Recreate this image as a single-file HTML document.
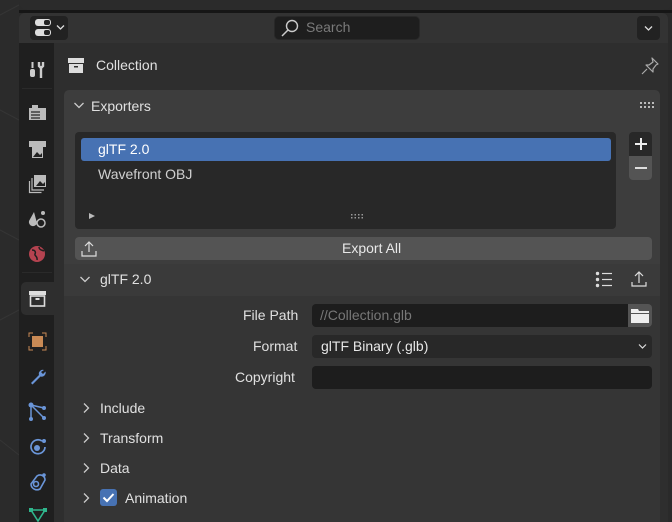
<!DOCTYPE html>
<html><head><meta charset="utf-8"><style>
*{margin:0;padding:0;box-sizing:border-box}
body{width:672px;height:522px;overflow:hidden;background:#2a2a2a;font-family:"Liberation Sans","DejaVu Sans",sans-serif;font-size:14px;color:#dcdcdc;position:relative}
.a{position:absolute}
.t{position:absolute;white-space:nowrap;line-height:1}
.ico{position:absolute}
</style></head><body>
<div class="a" style="left:0;top:0;width:19px;height:522px;background:#2b2b2b"></div>
<svg class="a" style="left:0;top:0" width="19" height="522"><g stroke="#353535" stroke-width="1"><line x1="0" y1="15" x2="19" y2="5"/><line x1="0" y1="110" x2="19" y2="120"/><line x1="0" y1="230" x2="19" y2="240"/><line x1="0" y1="320" x2="19" y2="310"/><line x1="0" y1="440" x2="19" y2="455"/></g></svg>
<div class="a" style="left:19px;top:0;width:653px;height:10px;background:#2b2b2b;border-radius:0 0 8px 8px"></div>
<div class="a" style="left:19px;top:10px;width:653px;height:3px;background:#161616"></div>
<div class="a" style="left:19px;top:13px;width:649px;height:509px;background:#2e2e2e;border-radius:6px 6px 0 0"></div>
<div class="a" style="left:19px;top:13px;width:649px;height:30px;background:#333;border-radius:6px 6px 0 0"></div>
<div class="a" style="left:30px;top:16px;width:38px;height:24px;background:#222;border-radius:4px"></div>
<div class="a" style="left:35px;top:19px;width:16px;height:7px;background:#ddd;border-radius:3px"></div>
<div class="a" style="left:35px;top:29px;width:16px;height:7px;background:#ddd;border-radius:3px"></div>
<div class="a" style="left:44px;top:20px;width:6px;height:5px;background:#222;border-radius:2px"></div>
<div class="a" style="left:44px;top:30px;width:6px;height:5px;background:#222;border-radius:2px"></div>
<svg class="a" style="left:56px;top:24px" width="9" height="7"><path d="M1 1.5L4.5 5L8 1.5" stroke="#ddd" fill="none" stroke-width="1.3"/></svg>
<div class="a" style="left:274px;top:16px;width:146px;height:24px;background:#1e1e1e;border-radius:5px;border:1px solid #282828"></div>
<svg class="a" style="left:279px;top:17px" width="22" height="22"><circle cx="13" cy="9" r="5.5" stroke="#ccc" fill="none" stroke-width="1.4"/><line x1="9" y1="13" x2="3" y2="19" stroke="#ccc" stroke-width="1.5"/></svg>
<div class="t" style="left:306px;top:20px;color:#7a7a7a;font-size:14px">Search</div>
<div class="a" style="left:637px;top:16px;width:23px;height:24px;background:#222;border-radius:4px"></div>
<svg class="a" style="left:644px;top:25px" width="9" height="7"><path d="M1 1.5L4.5 5L8 1.5" stroke="#ddd" fill="none" stroke-width="1.3"/></svg>
<div class="a" style="left:19px;top:43px;width:35px;height:479px;background:#1f1f1f"></div>
<div class="a" style="left:22px;top:88px;width:30px;height:1px;background:#2a2a2a"></div>
<div class="a" style="left:22px;top:272px;width:30px;height:1px;background:#2a2a2a"></div>
<div class="a" style="left:21px;top:282px;width:33px;height:33px;background:#2e2e2e;border-radius:5px 0 0 5px"></div>
<svg class="ico" style="left:28px;top:60px" width="20" height="20"><rect x="2" y="9" width="5" height="8" rx="2" fill="#ccc"/><rect x="3.5" y="2" width="2" height="6" fill="#ccc"/><path d="M11 2v4l2 2 2-2V2M13 8v10" stroke="#ccc" stroke-width="2.4" fill="none"/></svg>
<svg class="ico" style="left:28px;top:103px" width="20" height="20"><rect x="1" y="5" width="17" height="12" fill="#bbb"/><rect x="4" y="2" width="6" height="3" fill="#bbb"/><g stroke="#1f1f1f" stroke-width="1.2"><line x1="3" y1="9" x2="12" y2="9"/><line x1="3" y1="12" x2="12" y2="12"/><line x1="3" y1="15" x2="12" y2="15"/></g></svg>
<svg class="ico" style="left:28px;top:140px" width="20" height="20"><rect x="1" y="1" width="17" height="6" fill="#bbb"/><rect x="4" y="7" width="11" height="11" fill="#bbb"/><path d="M5 17l4-5 3 3 2-2v4z" fill="#1f1f1f"/></svg>
<svg class="ico" style="left:28px;top:174px" width="20" height="20"><rect x="6" y="1" width="12" height="12" fill="#bbb"/><path d="M8 12l4-5 3 3 2-2v4z" fill="#1f1f1f"/><path d="M4 4v12h12M1.5 7v11.5h12" stroke="#bbb" fill="none" stroke-width="1.2"/></svg>
<svg class="ico" style="left:28px;top:209px" width="20" height="20"><path d="M6 3l-5 9a4 4 0 0 0 8 2" fill="#bbb"/><circle cx="13" cy="14" r="4" stroke="#bbb" fill="none" stroke-width="1.5"/><circle cx="15" cy="4" r="2" fill="#bbb"/></svg>
<svg class="ico" style="left:27px;top:244px" width="20" height="20"><circle cx="10" cy="10" r="8" fill="#b54350"/><path d="M5 6c3 0 4 2 3 4s3 2 2 6M12 3c0 3 3 3 5 4" stroke="#1f1f1f" fill="none" stroke-width="1.5"/></svg>
<svg class="ico" style="left:27px;top:288px" width="21" height="21"><rect x="2" y="3" width="17" height="4" fill="#ddd"/><rect x="3.5" y="8" width="14" height="10" fill="none" stroke="#ddd" stroke-width="1.6"/><rect x="8.5" y="10" width="4" height="2" fill="#ddd"/></svg>
<svg class="ico" style="left:28px;top:332px" width="19" height="19"><rect x="4" y="4" width="11" height="11" fill="#c98a55"/><path d="M1 5V1h4M14 1h4v4M18 14v4h-4M5 18H1v-4" stroke="#c98a55" fill="none" stroke-width="1"/></svg>
<svg class="ico" style="left:28px;top:367px" width="20" height="20"><path d="M16 3a4 4 0 0 0-5 5L3 16l1.5 1.5 8-8a4 4 0 0 0 5-5l-2.5 2.5-2-2z" fill="#6a95d8"/></svg>
<svg class="ico" style="left:28px;top:402px" width="20" height="20"><path d="M3 3l13 3M3 3v14M3 3l13 13" stroke="#6a95d8" stroke-width="1.5"/><circle cx="3" cy="3" r="2.5" fill="#6a95d8"/><circle cx="16" cy="6" r="2" fill="#6a95d8"/><circle cx="3" cy="17" r="2" fill="#6a95d8"/><circle cx="16" cy="16" r="2" fill="#6a95d8"/></svg>
<svg class="ico" style="left:28px;top:437px" width="20" height="20"><path d="M14 4a7 7 0 1 0 3 6" stroke="#6a95d8" fill="none" stroke-width="1.7"/><circle cx="9" cy="11" r="3" fill="#6a95d8"/><circle cx="16" cy="4" r="2" fill="#6a95d8"/></svg>
<svg class="ico" style="left:28px;top:472px" width="20" height="20"><path d="M3 12a6 6 0 0 0 9 5l5-9a5 5 0 0 0-8-4z" stroke="#6a95d8" fill="none" stroke-width="1.6"/><circle cx="8" cy="12" r="2.5" stroke="#6a95d8" fill="none" stroke-width="1.6"/><circle cx="16" cy="3" r="1.8" fill="#6a95d8"/></svg>
<svg class="ico" style="left:28px;top:507px" width="20" height="15"><path d="M3 3h14L10 14z" stroke="#2fb58c" fill="none" stroke-width="1.6"/><rect x="1" y="1" width="4" height="4" fill="#2fb58c"/><rect x="15" y="1" width="4" height="4" fill="#2fb58c"/></svg>
<svg class="ico" style="left:67px;top:57px" width="18" height="17"><rect x="1" y="1" width="16" height="5" fill="#ddd"/><rect x="2" y="7" width="14" height="9" fill="#ddd"/><rect x="7" y="9" width="4" height="1.5" fill="#2e2e2e"/></svg>
<div class="t" style="left:96px;top:58px;font-size:14px;color:#e0e0e0">Collection</div>
<svg class="ico" style="left:640px;top:56px" width="20" height="20"><path d="M12 2l6 6-2 1-3 4 0 3-7-7 3 0 4-3zM7 13l-5 5" stroke="#aaa" fill="none" stroke-width="1.2" stroke-linejoin="round"/></svg>
<div class="a" style="left:64px;top:90px;width:596px;height:432px;background:#3d3d3d;border-radius:5px 5px 0 0"></div>
<svg class="a" style="left:73px;top:101px" width="12" height="9"><path d="M1.5 2L6 6.5L10.5 2" stroke="#ccc" fill="none" stroke-width="1.3"/></svg>
<div class="t" style="left:91px;top:99px;font-size:14px;color:#e0e0e0">Exporters</div>
<svg class="a" style="left:640px;top:102px" width="15" height="6"><g fill="#bbb"><rect x="0" y="0" width="2" height="2"/><rect x="4" y="0" width="2" height="2"/><rect x="8" y="0" width="2" height="2"/><rect x="12" y="0" width="2" height="2"/><rect x="0" y="4" width="2" height="2"/><rect x="4" y="4" width="2" height="2"/><rect x="8" y="4" width="2" height="2"/><rect x="12" y="4" width="2" height="2"/></g></svg>
<div class="a" style="left:75px;top:132px;width:541px;height:97px;background:#282828;border-radius:4px"></div>
<div class="a" style="left:81px;top:138px;width:530px;height:23px;background:#4772b3;border-radius:3px"></div>
<div class="t" style="left:98px;top:142px;color:#fff;font-size:14px">glTF 2.0</div>
<div class="t" style="left:98px;top:167px;color:#d0d0d0;font-size:14px">Wavefront OBJ</div>
<svg class="a" style="left:88px;top:212px" width="8" height="8"><path d="M1 1l6 3-6 3z" fill="#bbb"/></svg>
<svg class="a" style="left:351px;top:214px" width="13" height="5"><g fill="#999"><rect x="0" y="0" width="1.5" height="1.5"/><rect x="3.5" y="0" width="1.5" height="1.5"/><rect x="7" y="0" width="1.5" height="1.5"/><rect x="10.5" y="0" width="1.5" height="1.5"/><rect x="0" y="3" width="1.5" height="1.5"/><rect x="3.5" y="3" width="1.5" height="1.5"/><rect x="7" y="3" width="1.5" height="1.5"/><rect x="10.5" y="3" width="1.5" height="1.5"/></g></svg>
<div class="a" style="left:629px;top:132px;width:23px;height:24px;background:#282828;border-radius:4px 4px 0 0"></div>
<div class="a" style="left:629px;top:156px;width:23px;height:24px;background:#545454;border-radius:0 0 4px 4px"></div>
<div class="a" style="left:635px;top:143px;width:12px;height:1.5px;background:#eee"></div>
<div class="a" style="left:640px;top:138px;width:1.5px;height:12px;background:#eee"></div>
<div class="a" style="left:635px;top:167px;width:12px;height:1.5px;background:#ddd"></div>
<div class="a" style="left:75px;top:237px;width:577px;height:23px;background:#545454;border-radius:4px"></div>
<svg class="a" style="left:80px;top:240px" width="18" height="18"><path d="M9 2v10M5 6l4-4 4 4M2 11v5h14v-5" stroke="#ddd" fill="none" stroke-width="1.2"/></svg>
<div class="t" style="left:342px;top:241px;color:#e8e8e8;font-size:14px">Export All</div>
<div class="a" style="left:64px;top:264px;width:596px;height:32px;background:#3a3a3a"></div>
<div class="a" style="left:64px;top:296px;width:596px;height:226px;background:#353535"></div>
<svg class="a" style="left:79px;top:275px" width="12" height="9"><path d="M1.5 2L6 6.5L10.5 2" stroke="#ccc" fill="none" stroke-width="1.3"/></svg>
<div class="t" style="left:100px;top:272px;font-size:14px;color:#e0e0e0">glTF 2.0</div>
<svg class="a" style="left:595px;top:271px" width="20" height="18"><circle cx="2.5" cy="2.5" r="1.7" fill="#ddd"/><circle cx="2.5" cy="8.5" r="1.7" fill="#ddd"/><circle cx="2.5" cy="14.5" r="1.7" fill="#ddd"/><g stroke="#ddd" stroke-width="1.2"><line x1="7" y1="2.5" x2="17" y2="2.5"/><line x1="7" y1="8.5" x2="17" y2="8.5"/><line x1="7" y1="14.5" x2="17" y2="14.5"/></g></svg>
<svg class="a" style="left:630px;top:270px" width="18" height="18"><path d="M9 2v11M5 6l4-4 4 4M2 12v4h14v-4" stroke="#ddd" fill="none" stroke-width="1.2"/></svg>
<div class="t" style="left:243px;top:308px;font-size:14px;color:#e0e0e0">File Path</div>
<div class="a" style="left:312px;top:304px;width:316px;height:23px;background:#1d1d1d;border-radius:4px 0 0 4px"></div>
<div class="t" style="left:320px;top:308px;font-size:14px;color:#777">//Collection.glb</div>
<div class="a" style="left:628px;top:304px;width:24px;height:23px;background:#545454;border-radius:0 4px 4px 0"></div>
<svg class="a" style="left:629px;top:307px" width="22" height="18"><path d="M2 2h7l1 2h10v2H2z" fill="#eee"/><rect x="2" y="7" width="18" height="9" fill="#eee"/></svg>
<div class="t" style="left:253px;top:339px;font-size:14px;color:#e0e0e0">Format</div>
<div class="a" style="left:312px;top:335px;width:340px;height:23px;background:#282828;border-radius:4px"></div>
<div class="t" style="left:321px;top:339px;font-size:14px;color:#e8e8e8">glTF Binary (.glb)</div>
<svg class="a" style="left:638px;top:343px" width="9" height="7"><path d="M1 1.5L4.5 5L8 1.5" stroke="#ddd" fill="none" stroke-width="1.2"/></svg>
<div class="t" style="left:235px;top:370px;font-size:14px;color:#e0e0e0">Copyright</div>
<div class="a" style="left:312px;top:366px;width:340px;height:23px;background:#1d1d1d;border-radius:4px"></div>
<svg class="a" style="left:82px;top:402px" width="8" height="12"><path d="M2 1.5L6.5 6L2 10.5" stroke="#ccc" fill="none" stroke-width="1.3"/></svg>
<div class="t" style="left:100px;top:401px;font-size:14px;color:#e0e0e0">Include</div>
<svg class="a" style="left:82px;top:432px" width="8" height="12"><path d="M2 1.5L6.5 6L2 10.5" stroke="#ccc" fill="none" stroke-width="1.3"/></svg>
<div class="t" style="left:100px;top:431px;font-size:14px;color:#e0e0e0">Transform</div>
<svg class="a" style="left:82px;top:462px" width="8" height="12"><path d="M2 1.5L6.5 6L2 10.5" stroke="#ccc" fill="none" stroke-width="1.3"/></svg>
<div class="t" style="left:100px;top:461px;font-size:14px;color:#e0e0e0">Data</div>
<svg class="a" style="left:82px;top:492px" width="8" height="12"><path d="M2 1.5L6.5 6L2 10.5" stroke="#ccc" fill="none" stroke-width="1.3"/></svg>
<div class="a" style="left:100px;top:489px;width:17px;height:17px;background:#4772b3;border-radius:3px"></div>
<svg class="a" style="left:100px;top:489px" width="17" height="17"><path d="M3.5 8.5l3.5 3.5 6.5-7" stroke="#fff" fill="none" stroke-width="2"/></svg>
<div class="t" style="left:125px;top:491px;font-size:14px;color:#e0e0e0">Animation</div>
</body></html>
